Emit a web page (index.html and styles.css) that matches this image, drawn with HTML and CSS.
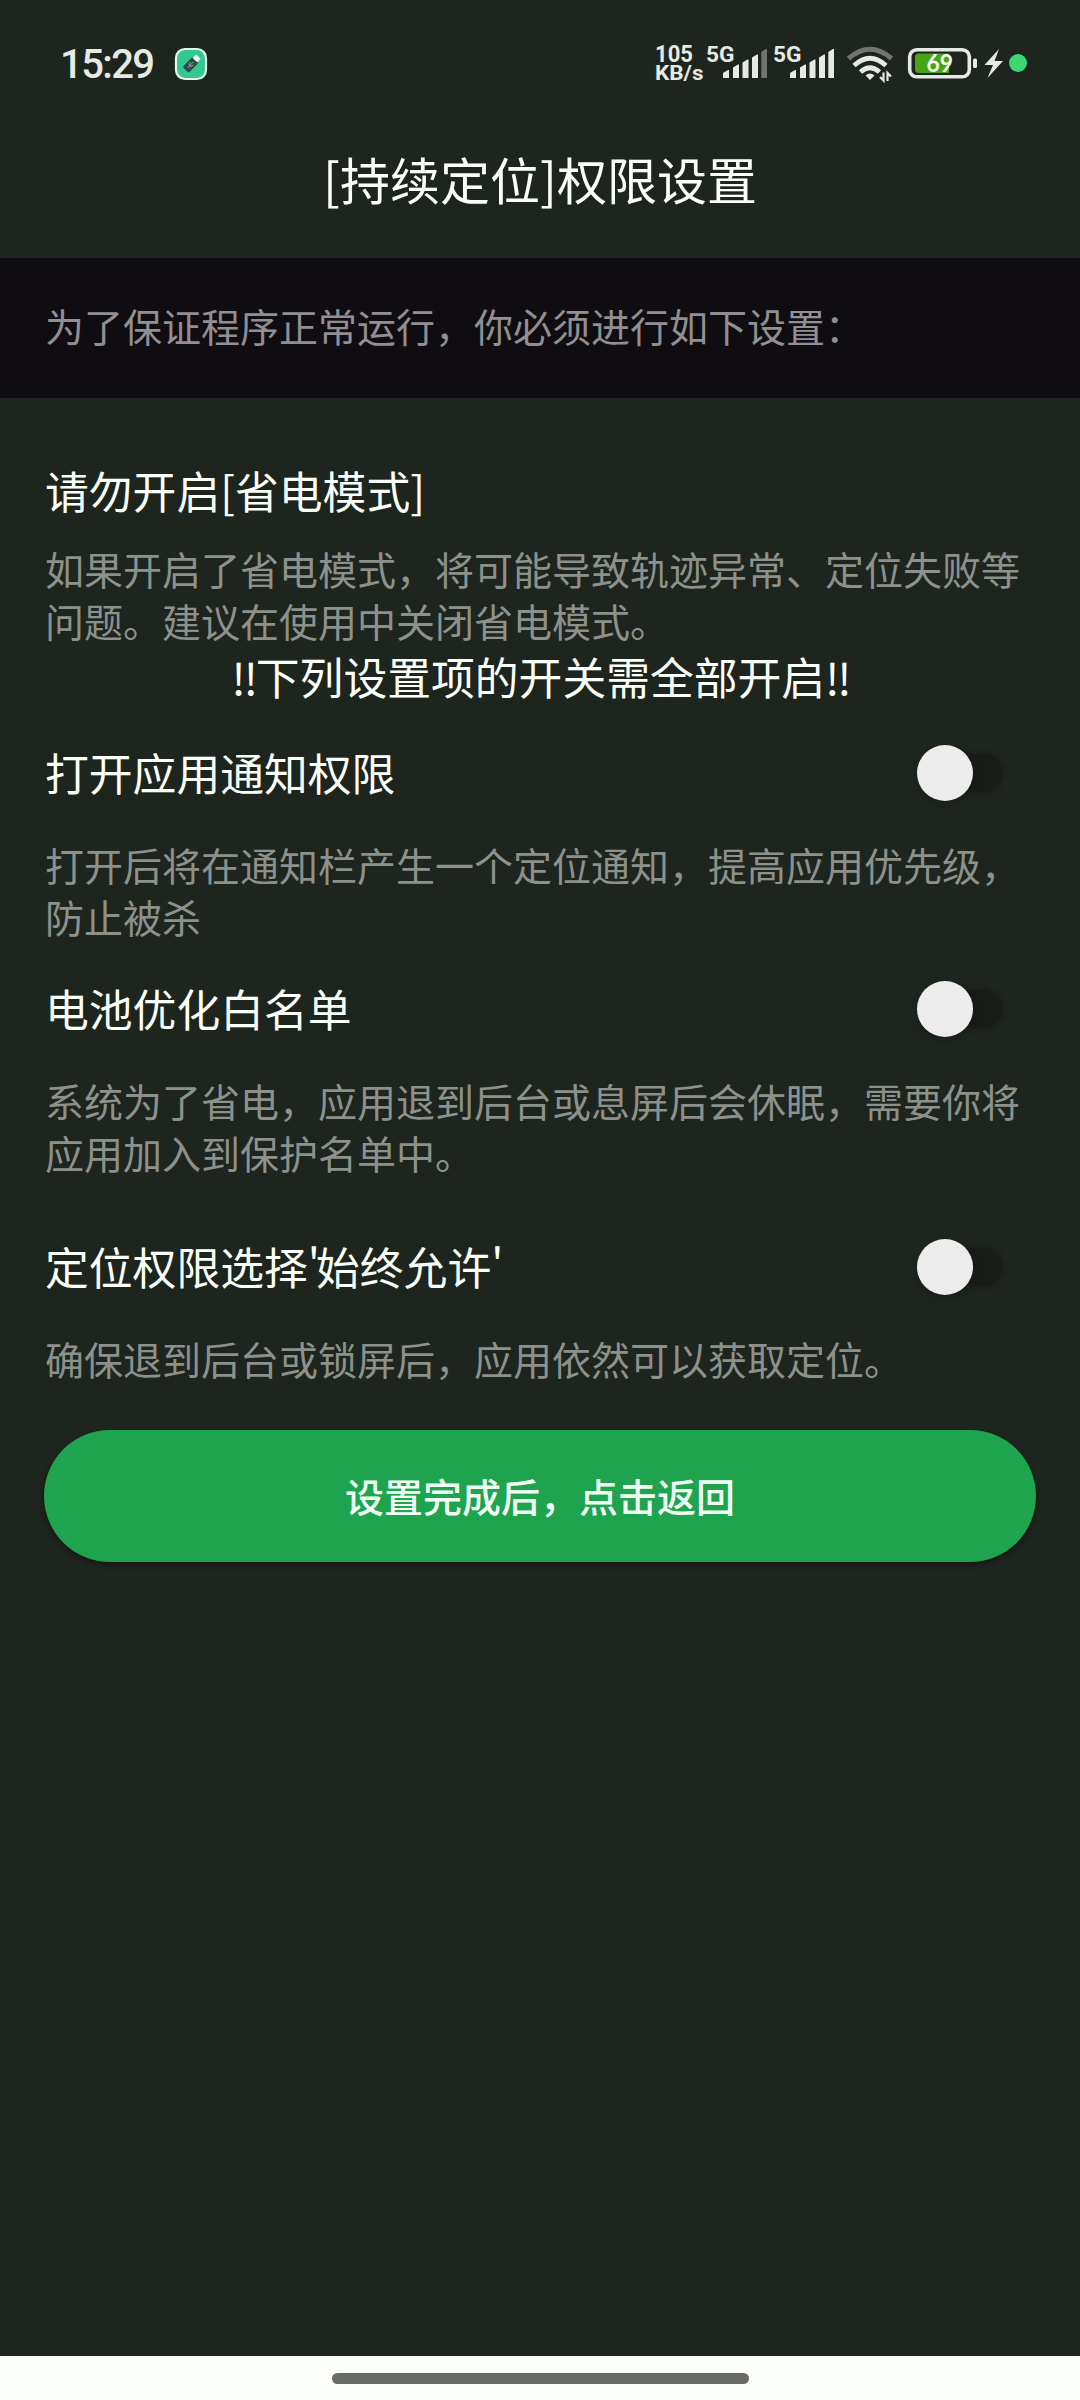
FILE: index.html
```html
<!DOCTYPE html>
<html lang="zh-CN">
<head>
<meta charset="utf-8">
<title>权限设置</title>
<link rel="stylesheet" href="styles.css">
</head>
<body>
<header class="status">
  <span class="clock">15:29</span>
  <svg class="app" width="34" height="34" viewBox="0 0 34 34">
    <rect x="2" y="2" width="30" height="30" rx="9" fill="#35c792" stroke="#e2f7ec" stroke-width="2.2"/>
    <g transform="rotate(44 17 17)">
      <rect x="13" y="11" width="8.5" height="14" rx="1.5" fill="#2b4a4b"/>
      <rect x="14" y="6.500" width="6.500" height="5" rx="1" fill="#e9f5ef"/>
      <path d="M17.200 14v8M15.200 16v2l2 1.500 2-1.500v-2" fill="none" stroke="#9eb0ae" stroke-width=".9"/>
    </g>
  </svg>
  <div class="indicators">
    <svg width="50" height="70" viewBox="655 30 50 70" class="label">
      <text x="655" y="62.500" font-size="23" textLength="38" lengthAdjust="spacingAndGlyphs">105</text>
      <text x="655" y="80.500" font-size="20.500" textLength="48.500" lengthAdjust="spacingAndGlyphs">KB/s</text>
    </svg>
    <svg width="67" height="70" viewBox="705 30 67 70" class="label">
      <text x="706" y="62.500" font-size="22" textLength="28.500" lengthAdjust="spacingAndGlyphs">5G</text>
      <path d="M723 79v-5l5-3h1v8zM733 79V68.500l5-3h1V79zM742.500 79V63.500l5-3h1V79zM752 79V58.500l5-3h1V79z" stroke-linejoin="round"/>
      <path d="M761.300 79V53l4.500-3h1.200v29z" fill="#71756f"/>
    </svg>
    <svg width="73" height="70" viewBox="772 30 73 70" class="label">
      <text x="773" y="62.500" font-size="22" textLength="28.500" lengthAdjust="spacingAndGlyphs">5G</text>
      <path d="M790 79v-5l5-3h1v8zM800 79V68.500l5-3h1V79zM809.500 79V63.500l5-3h1V79zM819 79V58.500l5-3h1V79zM828.300 79V53l4.500-3h1.200v29z"/>
    </svg>
    <svg width="62" height="70" viewBox="845 30 62 70" fill="none" stroke="#e6eae4">
      <path d="M848.500 59.500Q870 41 891.500 59.500" stroke="#71756f" stroke-width="5"/>
      <path d="M854 66.500Q870 52 886 66.500M860.500 73Q870 64.500 879.500 73" stroke-width="4.800"/>
      <path d="M865.500 76.500Q870 72.500 874.500 76.500L870 81z" fill="#e6eae4" stroke="none"/>
      <path d="M883.500 73.500v8l-3.500-3.500M887.500 82v-8l3.500 3.500" stroke-width="2.200"/>
    </svg>
    <svg width="75" height="70" viewBox="907 30 75 70">
      <rect x="909.700" y="50.700" width="59.600" height="27" rx="7" fill="none" stroke="#e6eae4" stroke-width="3.600"/>
      <path d="M919 54.500h30v19.500h-30q-4 0-4-4v-11.500q0-4 4-4z" fill="#46a416"/>
      <rect x="973" y="59.500" width="4" height="9.500" rx="1.500" fill="#e6eae4"/>
      <text x="926.500" y="72.500" class="charge" font-size="24" textLength="26.500" lengthAdjust="spacingAndGlyphs">69</text>
    </svg>
    <svg width="27" height="70" viewBox="982 30 27 70">
      <path d="M999 50l-14.500 16h8.500l-5.500 13 15.500-17h-8.500z" fill="#e6eae4"/>
    </svg>
    <svg width="18" height="70" viewBox="1009 30 18 70"><circle cx="1018" cy="64" r="9" fill="#3cd672"/></svg>
  </div>
</header>
<h1 class="title">[持续定位]权限设置</h1>
<p class="intro">为了保证程序正常运行，你必须进行如下设置：</p>
<main class="content">
  <h2 class="heading first">请勿开启[省电模式]</h2>
  <p class="desc">如果开启了省电模式，将可能导致轨迹异常、定位失败等问题。建议在使用中关闭省电模式。</p>
  <p class="warning"><span class="bang">!!</span>下列设置项的开关需全部开启<span class="bang">!!</span></p>
  <section class="item">
    <div class="row"><h2 class="heading">打开应用通知权限</h2><span class="switch"><span class="thumb"></span></span></div>
    <p class="desc">打开后将在通知栏产生一个定位通知，提高应用优先级，防止被杀</p>
  </section>
  <section class="item">
    <div class="row"><h2 class="heading">电池优化白名单</h2><span class="switch"><span class="thumb"></span></span></div>
    <p class="desc">系统为了省电，应用退到后台或息屏后会休眠，需要你将应用加入到保护名单中。</p>
  </section>
  <section class="item last">
    <div class="row"><h2 class="heading">定位权限选择<span class="quote">'</span>始终允许<span class="quote">'</span></h2><span class="switch"><span class="thumb"></span></span></div>
    <p class="desc">确保退到后台或锁屏后，应用依然可以获取定位。</p>
  </section>
  <button class="done">设置完成后，点击返回</button>
</main>
<footer class="nav"><span class="pill"></span></footer>
</body>
</html>
```

FILE: styles.css
```css
* { box-sizing: border-box; margin: 0; padding: 0; }
body {
  width: 1080px;
  height: 2400px;
  display: flex;
  flex-direction: column;
  overflow: hidden;
  background: #1e241e;
  color: #fbfffa;
  font-family: "Noto Sans CJK SC", sans-serif;
}
svg { display: block; flex: none; }
.status {
  height: 130px;
  padding: 0 53px 2px 60px;
  display: flex;
  align-items: center;
}
.clock {
  width: 114px;
  padding-top: 2px;
  font: 500 40px/60px Roboto, sans-serif;
  letter-spacing: -1.6px;
  color: #e6eae4;
}
.indicators { display: flex; margin-left: auto; }
.label { fill: #e6eae4; font-family: Roboto, sans-serif; font-weight: 700; }
.charge { fill: #f4fbef; font-family: Lato, sans-serif; font-weight: 700; }
.title {
  height: 128px;
  line-height: 96px;
  font-size: 50px;
  font-weight: 400;
  text-align: center;
}
.intro {
  height: 140px;
  padding: 0 45px;
  background: #100d12;
  color: #918f92;
  font-size: 39px;
  line-height: 134px;
}
.content { flex: 1; padding: 59px 44px 0 45px; }
.heading { font-size: 43.8px; font-weight: 400; line-height: 66px; }
.first { margin-bottom: 19px; }
.desc { color: #8d918c; font-size: 39px; line-height: 52px; }
.warning { font-size: 43.8px; line-height: 60px; text-align: center; }
.bang { letter-spacing: -2px; }
.quote { letter-spacing: -4px; }
.item { height: 236px; padding-top: 33px; }
.item + .item { height: 258px; }
.item + .item.last { height: 230px; }
.row { display: flex; align-items: center; justify-content: space-between; height: 66px; margin-bottom: 33px; }
.switch {
  display: flex;
  align-items: center;
  width: 77px;
  height: 38px;
  margin: 1px 34px 0 0;
  border-radius: 20px;
  background: #181b16;
  box-shadow: 0 0 5px #181b16;
}
.thumb {
  flex: none;
  width: 56px;
  height: 56px;
  margin-left: -8px;
  border-radius: 50%;
  background: #ececec;
  box-shadow: 0 4px 8px rgba(0, 0, 0, .15);
}
.done {
  display: block;
  width: 992px;
  height: 132px;
  margin-left: -1px;
  padding-bottom: 3px;
  border: 0;
  border-radius: 66px;
  background: #1ea44f;
  box-shadow: 0 3px 6px rgba(0, 0, 0, .35);
  color: #f0fff4;
  font: 500 39px "Noto Sans CJK SC", sans-serif;
}
.nav { height: 44px; background: #fdfffc; display: flex; justify-content: center; padding-top: 17px; }
.pill { width: 417px; height: 11px; border-radius: 6px; background: #696b67; }
```
